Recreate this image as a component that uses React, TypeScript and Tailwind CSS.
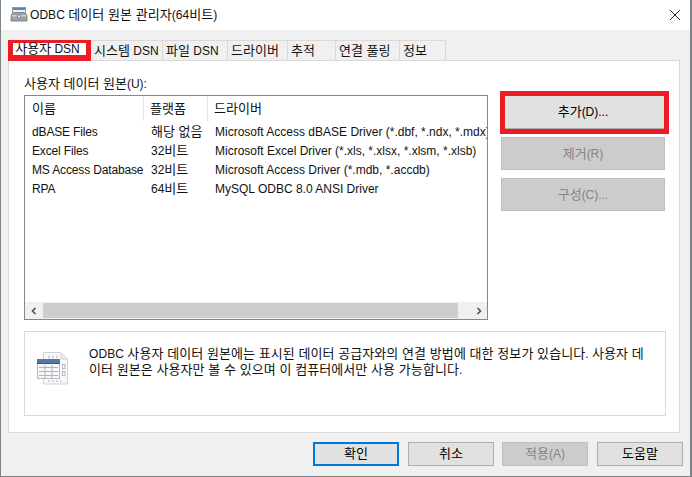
const ko = { fontFamily: '"Liberation Sans", "Noto Sans CJK KR", sans-serif' };

// Hangul runs are set one pixel larger than Latin, as the reference's Korean face is wider.
function K({ t }: { t: string }) {
  return (
    <span className="whitespace-pre">
      {t.split(/([가-힣]+(?: [가-힣]+)*)/).map((part, i) =>
        i % 2 === 1 ? (
          <span key={i} className="text-[13px]">
            {part}
          </span>
        ) : (
          <span key={i}>{part}</span>
        ),
      )}
    </span>
  );
}

function TitleIcon() {
  return (
    <svg width="18" height="16" viewBox="0 0 18 16">
      <rect x="2.5" y="0.5" width="13" height="9" fill="#eef2f6" stroke="#8d99a5" />
      <rect x="3" y="1" width="12" height="2" fill="#5f86b5" />
      <path d="M1 8 L4 5.5 H14 L17 8 V14 H1 Z" fill="#9aa5ae" stroke="#69747e" strokeWidth="0.8" />
      <rect x="1.5" y="8" width="15" height="1.5" fill="#c9d0d6" />
      <rect x="7.5" y="8" width="3" height="3" fill="#e6eaed" stroke="#59646e" strokeWidth="0.6" />
    </svg>
  );
}

function DocIcon() {
  return (
    <svg width="32" height="33" viewBox="0 0 32 33">
      <path d="M6.5 0.5 H24 L30.5 7 V32 H6.5 Z" fill="#f8f8f8" stroke="#d0d3d6" />
      <path d="M24 0.5 V7 H30.5" fill="#e8eaec" stroke="#d0d3d6" />
      <g fill="none" stroke="#b4b9be" strokeWidth="1">
        <rect x="25.5" y="12.5" width="2.5" height="4" />
        <rect x="25.5" y="19.5" width="2.5" height="4" />
        <path d="M12 3.5 V6.5 M16 3.5 V6.5 M20 3.5 V6.5 M12 28 V30 M16 28 V30 M20 28 V30 M24 28 V30" />
      </g>
      <rect x="0.5" y="7.5" width="22" height="19" fill="#f6f7f9" stroke="#b4bac2" />
      <rect x="0" y="7" width="23" height="4" fill="#5576a6" />
      <rect x="0" y="11" width="23" height="1" fill="#34558a" />
      <g stroke="#adb5bf" strokeWidth="1">
        <path d="M2 15.5 H21 M2 19.5 H21 M2 23.5 H21" />
        <path d="M8 13 V26 M15 13 V26" />
      </g>
    </svg>
  );
}

const tabs = [
  ['시스템 DSN', 'w-[72px]'],
  ['파일 DSN', 'w-[65px]'],
  ['드라이버', 'w-[60px]'],
  ['추적', 'w-[48px]'],
  ['연결 풀링', 'w-[64px]'],
  ['정보', 'w-[46px]'],
];

const rows = [
  ['dBASE Files', '해당 없음', 'Microsoft Access dBASE Driver (*.dbf, *.ndx, *.mdx)'],
  ['Excel Files', '32비트', 'Microsoft Excel Driver (*.xls, *.xlsx, *.xlsm, *.xlsb)'],
  ['MS Access Database', '32비트', 'Microsoft Access Driver (*.mdb, *.accdb)'],
  ['RPA', '64비트', 'MySQL ODBC 8.0 ANSI Driver'],
];

function SideButton({ label }: { label: string }) {
  return (
    <div className="h-[33px] flex items-center justify-center bg-[#cccccc] border border-[#bfbfbf] text-[#838383]">
      <K t={label} />
    </div>
  );
}

function BottomButton({ label, variant }: { label: string; variant?: 'default' | 'disabled' }) {
  if (variant === 'default')
    return (
      <div className="w-[86px] h-[24px] flex items-center justify-center bg-[#e1e1e1] border-2 border-[#0078d7] text-black">
        <K t={label} />
      </div>
    );
  if (variant === 'disabled')
    return (
      <div className="w-[86px] h-[24px] -ml-px flex items-center justify-center bg-[#cccccc] border border-[#bfbfbf] text-[#838383]">
        <K t={label} />
      </div>
    );
  return (
    <div className="w-[86px] h-[24px] flex items-center justify-center bg-[#e1e1e1] border border-[#adadad] text-black">
      <K t={label} />
    </div>
  );
}

export default function App() {
  return (
    <div
      style={ko}
      className="w-[692px] h-[477px] flex flex-col bg-[#f0f0f0] border-l border-r-2 border-b border-[#7f8388] text-[12px] leading-[16px] text-[#111111] overflow-hidden"
    >
      <div className="h-[30px] shrink-0 bg-white flex items-center pl-[9px] pr-[8px]">
        <TitleIcon />
        <span className="ml-[2px] tracking-[0.05px]">
          <K t="ODBC 데이터 원본 관리자(64비트)" />
        </span>
        <svg className="ml-auto" width="14" height="14" viewBox="0 0 14 14">
          <path d="M2 2 L12 12 M12 2 L2 12" stroke="#222" strokeWidth="1" fill="none" />
        </svg>
      </div>

      <div className="flex-1 flex flex-col pl-[7px] pr-[10px]">
        <div className="h-[30px] shrink-0 flex items-end relative">
          <div className="w-[83px] h-[21px] flex items-center justify-center pr-[4px] bg-white border-t-[3px] border-x-[5px] border-b-[6px] border-[#ed1c24] relative z-10 -mb-px whitespace-nowrap">
            <K t="사용자 DSN" />
          </div>
          {tabs.map(([t, w]) => (
            <div
              key={t}
              className={`${w} h-[20px] flex items-center pl-[3px] bg-[#f0f0f0] border border-l-0 border-b-0 border-[#d9d9d9] whitespace-nowrap`}
            >
              <K t={t} />
            </div>
          ))}
        </div>

        <div className="h-[373px] shrink-0 bg-white border border-[#d9d9d9] pt-[13px] pl-[15px] pr-[13px] flex flex-col">
          <div className="h-[21px] leading-[20px]">
            <K t="사용자 데이터 원본(U):" />
          </div>
          <div className="flex gap-[13px]">
            <div className="w-[464px] h-[225px] border border-[#828790] flex flex-col overflow-hidden">
              <div className="flex-1 pl-[7px] whitespace-nowrap overflow-hidden">
                <div className="flex h-[25px] mb-px items-center">
                  <div className="w-[112px] shrink-0 border-r border-[#e5e5e5] h-full flex items-center">
                    <K t="이름" />
                  </div>
                  <div className="w-[64px] shrink-0 pl-[6px] border-r border-[#e5e5e5] h-full flex items-center">
                    <K t="플랫폼" />
                  </div>
                  <div className="pl-[6px]">
                    <K t="드라이버" />
                  </div>
                </div>
                {rows.map((r) => (
                  <div key={r[0]} className="flex h-[19px] items-center">
                    <div className="w-[119px] shrink-0 tracking-[-0.15px]">{r[0]}</div>
                    <div className="w-[64px] shrink-0">
                      <K t={r[1]} />
                    </div>
                    <div className="shrink-0">{r[2]}</div>
                  </div>
                ))}
              </div>
              <div className="h-[17px] shrink-0 flex bg-[#f0f0f0]">
                <div className="w-[18px] flex items-center justify-center">
                  <svg width="8" height="8" viewBox="0 0 8 8">
                    <path d="M5.5 1 L2.5 4 L5.5 7" stroke="#505050" strokeWidth="1.6" fill="none" />
                  </svg>
                </div>
                <div className="flex-1 my-[1px] bg-[#cdcdcd]"></div>
                <div className="w-[29px] flex items-center justify-end pr-[4px]">
                  <svg width="8" height="8" viewBox="0 0 8 8">
                    <path d="M2.5 1 L5.5 4 L2.5 7" stroke="#505050" strokeWidth="1.6" fill="none" />
                  </svg>
                </div>
              </div>
            </div>

            <div className="w-[164px] flex flex-col gap-[8px] pt-[1px] relative">
              <div className="h-[33px] flex items-center justify-center bg-[#e1e1e1] border-b border-[#adadad] text-black">
                <K t="추가(D)..." />
              </div>
              <div className="absolute -left-[1px] -top-[4px] w-[169px] h-[43px] border-[5px] border-[#ed1c24]"></div>
              <SideButton label="제거(R)" />
              <SideButton label="구성(C)..." />
            </div>
          </div>

          <div className="mt-[11px] w-[642px] h-[85px] border border-[#d9d9d9] flex">
            <div className="w-[64px] pl-[12px] pt-[20px] shrink-0">
              <DocIcon />
            </div>
            <div className="pt-[14px] whitespace-nowrap tracking-[0.07px]">
              <div>
                <K t="ODBC 사용자 데이터 원본에는 표시된 데이터 공급자와의 연결 방법에 대한 정보가 있습니다. 사용자 데" />
              </div>
              <div>
                <K t="이터 원본은 사용자만 볼 수 있으며 이 컴퓨터에서만 사용 가능합니다." />
              </div>
            </div>
          </div>
        </div>

        <div className="flex-1 flex items-center justify-end gap-[9px] -mr-[3px] pb-[1px]">
          <BottomButton label="확인" variant="default" />
          <BottomButton label="취소" />
          <BottomButton label="적용(A)" variant="disabled" />
          <BottomButton label="도움말" />
        </div>
      </div>
    </div>
  );
}
